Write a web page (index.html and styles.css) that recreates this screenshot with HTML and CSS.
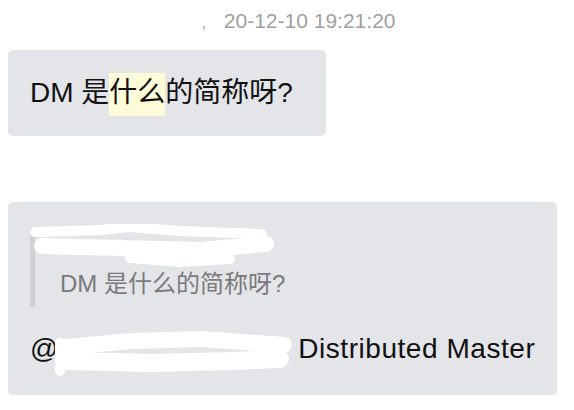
FILE: index.html
```html
<!DOCTYPE html>
<html lang="zh-CN">
<head>
<meta charset="utf-8">
<title>DM</title>
<link rel="stylesheet" href="styles.css">
</head>
<body>
<div class="chat">
  <div class="msg">
    <div class="header">
      <span class="redact-name"></span><span class="comma">,</span><span class="time">20-12-10 19:21:20</span>
    </div>
    <div class="bubble bubble-first">
      <p class="line">DM 是<span class="hl">什么</span>的简称呀?</p>
    </div>
  </div>
  <div class="msg msg-second">
    <div class="header"></div>
    <div class="bubble bubble-reply">
      <div class="quote">
        <div class="quote-name"></div>
        <p class="quote-text">DM 是什么的简称呀?</p>
      </div>
      <p class="at-line">@<span class="redact-at"></span> <span class="answer">Distributed Master</span></p>
      <svg class="smudge smudge-quote" width="244" height="48" viewBox="0 0 244 48" aria-hidden="true">
        <g fill="none" stroke="#ffffff" stroke-linecap="round" stroke-linejoin="round">
          <path d="M5 8 L70 6 L100 3 L150 7 L232 10" stroke-width="10"/>
          <path d="M12 22 L90 24 L170 26 L236 20" stroke-width="16"/>
          <path d="M100 34 L150 38 L200 35" stroke-width="10"/>
        </g>
      </svg>
      <svg class="smudge smudge-at" width="244" height="50" viewBox="0 0 244 50" aria-hidden="true">
        <g fill="none" stroke="#ffffff" stroke-linecap="round" stroke-linejoin="round">
          <path d="M14 16 L80 10 L150 8 L232 14" stroke-width="16"/>
          <path d="M14 30 L100 32 L180 30 L228 28" stroke-width="18"/>
          <path d="M8 12 L8 40" stroke-width="10"/>
        </g>
      </svg>
    </div>
  </div>
</div>
</body>
</html>
```
FILE: styles.css
```css
html, body {
  margin: 0;
  padding: 0;
  background: #ffffff;
}

body {
  font-family: "Liberation Sans", "Noto Sans CJK SC", sans-serif;
  color: #111111;
}

.chat {
  padding: 0 8px;
}

.msg-second {
  margin-top: 16px;
}

.header {
  height: 42px;
  line-height: 42px;
  font-size: 21px;
  color: #a0a0a0;
  white-space: nowrap;
}

.redact-name {
  display: inline-block;
  width: 193px;
  height: 1px;
}

.comma {
  color: #c4c4c4;
}

.time {
  margin-left: 17px;
}

.bubble {
  display: inline-block;
  background: #e4e5e9;
  border-radius: 5px;
  margin-top: 8px;
  box-sizing: border-box;
}

.bubble-first {
  padding: 0 33px 0 22px;
}

.line {
  margin: 0;
  font-size: 28px;
  line-height: 86px;
  white-space: nowrap;
}

.hl {
  display: inline-block;
  line-height: 28px;
  padding: 6px 0 9px;
  background: #fefbd8;
}

.bubble-reply {
  position: relative;
  padding: 26px 22px 26px 22px;
}

.quote {
  border-left: 5px solid #cfd0d4;
  padding-left: 25px;
  padding-bottom: 2px;
}

.quote-name {
  height: 34px;
}

.quote-text {
  margin: 0;
  font-size: 24px;
  line-height: 43px;
  color: #7a7a7c;
  white-space: nowrap;
}

.at-line {
  margin: 22px 0 0;
  font-size: 28px;
  line-height: 40px;
  white-space: nowrap;
}

.redact-at {
  display: inline-block;
  width: 232px;
  height: 1px;
}

.answer {
  letter-spacing: 0.55px;
}

.smudge {
  position: absolute;
}

.smudge-quote {
  left: 22px;
  top: 22px;
}

.smudge-at {
  left: 44px;
  top: 129px;
}
```
